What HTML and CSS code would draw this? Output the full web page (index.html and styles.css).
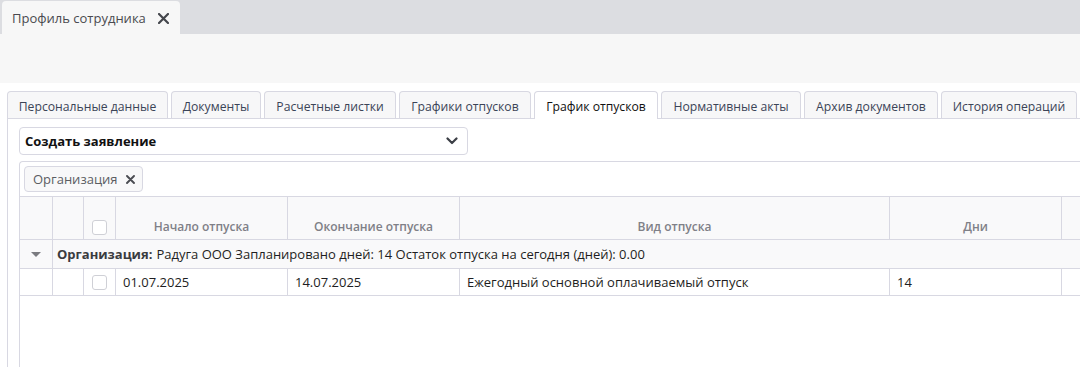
FILE: index.html
```html
<!DOCTYPE html>
<html lang="ru">
<head>
<meta charset="utf-8">
<title>Профиль сотрудника</title>
<link rel="stylesheet" href="styles.css">
</head>
<body>
<div class="topbar">
  <div class="doc-tab">
    <span class="doc-title">Профиль сотрудника</span>
    <svg class="doc-close" width="11" height="11" viewBox="0 0 11 11"><path d="M1 1L10 10M10 1L1 10" stroke="#44464c" stroke-width="2.2" stroke-linecap="round"/></svg>
  </div>
</div>
<div class="strip"></div>
<div class="content">
  <div class="tabs">
    <div class="tab w161">Персональные данные</div>
    <div class="tab w90">Документы</div>
    <div class="tab w132">Расчетные листки</div>
    <div class="tab w132">Графики отпусков</div>
    <div class="tab w124 active">График отпусков</div>
    <div class="tab w140">Нормативные акты</div>
    <div class="tab w134">Архив документов</div>
    <div class="tab w136">История операций</div>
  </div>
  <div class="panel">
    <div class="select">
      <span class="select-label">Создать заявление</span>
      <svg class="chev" width="12" height="8" viewBox="0 0 12 8"><path d="M1.5 1.5L6 6L10.5 1.5" fill="none" stroke="#3c3f46" stroke-width="2.2" stroke-linecap="round" stroke-linejoin="round"/></svg>
    </div>
    <div class="grid-panel">
      <div class="groupbar">
        <div class="chip">Организация
          <svg class="chip-x" width="9" height="9" viewBox="0 0 9 9"><path d="M1 1L8 8M8 1L1 8" stroke="#4a4c52" stroke-width="1.9" stroke-linecap="round"/></svg>
        </div>
      </div>
      <div class="row head">
        <div class="cell"></div>
        <div class="cell"></div>
        <div class="cell cb-cell"><span class="cb"></span></div>
        <div class="cell hc">Начало отпуска</div>
        <div class="cell hc">Окончание отпуска</div>
        <div class="cell hc">Вид отпуска</div>
        <div class="cell hc">Дни</div>
        <div class="cell"></div>
      </div>
      <div class="row group">
        <div class="cell tri-cell"><span class="tri"></span></div>
        <div class="group-text"><b>Организация:</b> Радуга ООО Запланировано дней: 14 Остаток отпуска на сегодня (дней): 0.00</div>
      </div>
      <div class="row data">
        <div class="cell"></div>
        <div class="cell"></div>
        <div class="cell cb-cell"><span class="cb"></span></div>
        <div class="cell dc">01.07.2025</div>
        <div class="cell dc">14.07.2025</div>
        <div class="cell dc">Ежегодный основной оплачиваемый отпуск</div>
        <div class="cell dc">14</div>
        <div class="cell"></div>
      </div>
    </div>
  </div>
</div>
</body>
</html>
```

FILE: styles.css
```css
* { box-sizing: border-box; }
html, body { margin: 0; padding: 0; }
body {
  width: 1080px;
  height: 367px;
  overflow: hidden;
  background: #ffffff;
  font-family: "Open Sans", "Noto Sans", sans-serif;
  color: #222;
}
.topbar {
  height: 34px;
  background: #dcdde1;
  padding: 1px 0 0 2px;
  display: flex;
  align-items: flex-end;
}
.doc-tab {
  width: 178px;
  height: 33px;
  background: #f7f7f7;
  border-radius: 4px 4px 0 0;
  display: flex;
  align-items: center;
  padding-left: 10px;
  gap: 12px;
}
.doc-title {
  font-size: 13px;
  color: #4a4a4f;
}
.doc-close { margin-top: 1px; }
.strip {
  height: 49px;
  background: #f7f7f7;
}
.content {
  padding-top: 8px;
  padding-left: 7px;
}
.tabs {
  display: flex;
  gap: 3px;
  height: 27px;
  position: relative;
  z-index: 1;
}
.tab {
  flex: none;
  height: 27px;
  border: 1px solid #d8d8e2;
  border-bottom: none;
  border-radius: 4px 4px 0 0;
  background: #f7f7f8;
  font-size: 12.2px;
  color: #3b4457;
  display: flex;
  align-items: center;
  justify-content: center;
  padding-top: 2px;
  white-space: nowrap;
}
.w161 { width: 161px; }
.w90 { width: 90px; }
.w132 { width: 132px; }
.w124 { width: 124px; }
.w140 { width: 140px; }
.w134 { width: 134px; }
.w136 { width: 136px; }
.tab.active {
  background: #ffffff;
  color: #111;
  height: 28px;
  padding-bottom: 1px;
}
.panel {
  width: 1200px;
  border-left: 1px solid #d8d8e2;
  border-top: 1px solid #d8d8e2;
  padding: 8px 0 0 11px;
  height: 260px;
}
.select {
  width: 449px;
  height: 28px;
  border: 1px solid #d8d8e2;
  border-radius: 4px;
  display: flex;
  align-items: center;
  justify-content: space-between;
  padding: 0 9px 0 5px;
}
.select-label {
  font-size: 13px;
  font-weight: 700;
  color: #111;
}
.grid-panel {
  margin-top: 6px;
  border-left: 1px solid #d8d8e2;
  border-top: 1px solid #d8d8e2;
  border-radius: 4px 0 0 0;
  height: 220px;
}
.groupbar {
  padding: 4px 0 4px 4px;
  border-bottom: 1px solid #d8d8e2;
  height: 35px;
}
.chip {
  display: inline-flex;
  align-items: center;
  gap: 8px;
  height: 26px;
  padding: 0 7px 0 8px;
  border: 1px solid #d8d8e2;
  border-radius: 4px;
  background: #f8f8f9;
  font-size: 13px;
  color: #5b5d63;
}
.row {
  display: grid;
  grid-template-columns: 33px 31px 32px 172px 172px 430px 172px 200px;
  border-bottom: 1px solid #d8d8e2;
}
.cell {
  border-right: 1px solid #d8d8e2;
  display: flex;
  align-items: center;
  min-width: 0;
}
.head { height: 43px; background: #f9f9fa; }
.head .cell { align-items: flex-end; }
.hc {
  justify-content: center;
  font-size: 12px;
  font-weight: 600;
  color: #7f8087;
  padding-bottom: 4px;
}
.cb-cell { justify-content: center; }
.head .cb-cell { padding-bottom: 4px; }
.cb {
  width: 15px;
  height: 15px;
  border: 1px solid #cfd0d6;
  border-radius: 3px;
  background: #fff;
}
.group {
  height: 29px;
  background: #f9f9fa;
  grid-template-columns: 33px 1fr;
}
.tri-cell { justify-content: center; }
.tri {
  width: 0;
  height: 0;
  border-left: 5px solid transparent;
  border-right: 5px solid transparent;
  border-top: 5px solid #7a7b80;
}
.group-text {
  display: flex;
  align-items: center;
  padding-left: 4px;
  font-size: 13px;
  color: #1e1e22;
  white-space: nowrap;
}
.group-text b { font-weight: 700; color: #3a3b40; margin-right: 4px; }
.data { height: 27px; }
.dc {
  font-size: 13px;
  color: #1e1e22;
  padding-left: 7px;
  white-space: nowrap;
}
```
